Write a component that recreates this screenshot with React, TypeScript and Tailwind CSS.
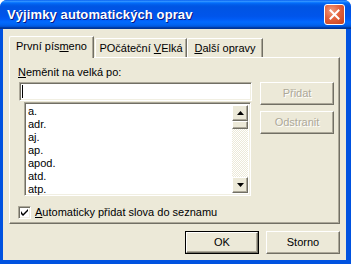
import type { ReactNode } from "react";

const FONT = "[font-family:'Liberation_Sans',Arial,sans-serif]";

const raised =
  "border border-t-white border-l-white border-r-[#716F64] border-b-[#716F64] shadow-[inset_-1px_-1px_#ACA899]";
const sunken =
  "border border-t-[#ACA899] border-l-[#ACA899] border-r-white border-b-white shadow-[inset_1px_1px_#716F64,inset_-1px_-1px_#F1EFE2]";

const WORDS = ["a.", "adr.", "aj.", "ap.", "apod.", "atd.", "atp."];

function Tab({ children, active, width }: { children: ReactNode; active?: boolean; width: string }) {
  return (
    <div
      className={`${width} flex items-center justify-center border-t border-l border-t-white border-l-white border-r border-r-[#716F64] shadow-[inset_-1px_0_#ACA899] rounded-tl-[2px] bg-[#ECE9D8] ${
        active ? "h-[22px] -mb-px relative z-10 pb-[2px]" : "h-[19px] pt-[1px]"
      }`}
    >
      {children}
    </div>
  );
}

function Button({
  children,
  disabled,
  isDefault,
}: {
  children: ReactNode;
  disabled?: boolean;
  isDefault?: boolean;
}) {
  return (
    <div className={`w-[74px] h-[23px] ${isDefault ? "border border-black" : ""}`}>
      <div
        className={`w-full h-full flex items-center justify-center bg-[#ECE9D8] ${raised} ${
          disabled ? "text-[#ACA899] [text-shadow:1px_1px_#fff]" : "text-black"
        }`}
      >
        {children}
      </div>
    </div>
  );
}

function Arrow({ up }: { up?: boolean }) {
  return (
    <div className={`w-[16px] h-[16px] flex items-center justify-center bg-[#ECE9D8] ${raised}`}>
      <svg width="7" height="4" viewBox="0 0 7 4">
        <path d={up ? "M3.5 0 L7 4 L0 4 Z" : "M0 0 L7 0 L3.5 4 Z"} fill="#000" />
      </svg>
    </div>
  );
}

export default function App() {
  return (
    <div className={`w-[351px] h-[264px] flex flex-col bg-[#0052E0] rounded-t-[7px] overflow-hidden ${FONT} text-[11px] text-black`}>
      <div className="h-[29px] shrink-0 flex items-center pl-[7px] pr-[6px] bg-[linear-gradient(to_bottom,#0058EE_0%,#3593FF_4%,#288EFF_6%,#127DFF_8%,#036FFC_10%,#0262EE_14%,#0057E5_20%,#0054E3_24%,#0055EB_56%,#005BF5_66%,#026AFE_76%,#0062EF_86%,#0052D6_92%,#0040AB_94%,#003092_100%)]">
        <span className="text-white font-bold text-[13px] tracking-[0.1px] [text-shadow:1px_1px_#0A1883]">
          Výjimky automatických oprav
        </span>
        <div className="ml-auto w-[21px] h-[21px] rounded-[3px] border border-white bg-[radial-gradient(circle_at_35%_30%,#F19C7E_0%,#E2613C_45%,#C7401C_100%)] flex items-center justify-center">
          <svg width="11" height="11" viewBox="0 0 11 11">
            <path d="M1.5 1.5 L9.5 9.5 M9.5 1.5 L1.5 9.5" stroke="#fff" strokeWidth="2" strokeLinecap="square" />
          </svg>
        </div>
      </div>

      <div className="flex-1 ml-[3px] mr-[5px] mb-[4px] bg-[#ECE9D8] px-[6px] pt-[7px] flex flex-col">
        <div className="flex items-end h-[21px]">
          <Tab active width="w-[85px]">
            <span>
              První pís<u>m</u>eno
            </span>
          </Tab>
          <Tab width="w-[92px] ml-px">
            <span>
              POčáteční <u>V</u>Elká
            </span>
          </Tab>
          <Tab width="w-[76px]">
            <span>
              <u>D</u>alší opravy
            </span>
          </Tab>
        </div>

        <div className="h-[167px] border border-t-white border-l-white border-r-[#716F64] border-b-[#716F64] shadow-[inset_-1px_-1px_#ACA899] pl-[9px] pt-[8px] flex flex-col">
          <div className="leading-[13px] h-[13px] -ml-px">
            <u>N</u>eměnit na velká po:
          </div>
          <div className="flex gap-[8px] mt-[3px]">
            <div className="w-[233px] flex flex-col">
              <div className={`h-[19px] bg-white ${sunken} flex items-center pl-[2px]`}>
                <div className="w-px h-[13px] bg-black" />
              </div>
              <div className={`ml-[5px] mt-[1px] w-[227px] h-[94px] bg-white ${sunken} p-[2px] flex`}>
                <div className="flex-1 flex flex-col pl-[1px]">
                  {WORDS.map((w) => (
                    <div key={w} className="leading-[13px] h-[13px]">
                      {w}
                    </div>
                  ))}
                </div>
                <div className="w-[16px] flex flex-col bg-[repeating-conic-gradient(#ffffff_0%_25%,#ECE9D8_0%_50%)] bg-[length:2px_2px]">
                  <Arrow up />
                  <div className={`h-[8px] bg-[#ECE9D8] ${raised}`} />
                  <div className="flex-1" />
                  <Arrow />
                </div>
              </div>
            </div>
            <div className="flex flex-col gap-[6px]">
              <Button disabled>Přidat</Button>
              <Button disabled>Odstranit</Button>
            </div>
          </div>
          <div className="flex items-center mt-[9px] -ml-px h-[14px]">
            <div className={`w-[13px] h-[13px] bg-white ${sunken} flex items-center justify-center`}>
              <svg width="7" height="7" viewBox="0 0 7 7">
                <path d="M0 2 L0 5 L2 7 L7 2 L7 0 L2 5 Z" fill="#000" />
              </svg>
            </div>
            <span className="ml-[4px]">
              <u>A</u>utomaticky přidat slova do seznamu
            </span>
          </div>
        </div>

        <div className="flex justify-end gap-[7px] mt-[7px]">
          <Button isDefault>OK</Button>
          <Button>Storno</Button>
        </div>
      </div>
    </div>
  );
}
